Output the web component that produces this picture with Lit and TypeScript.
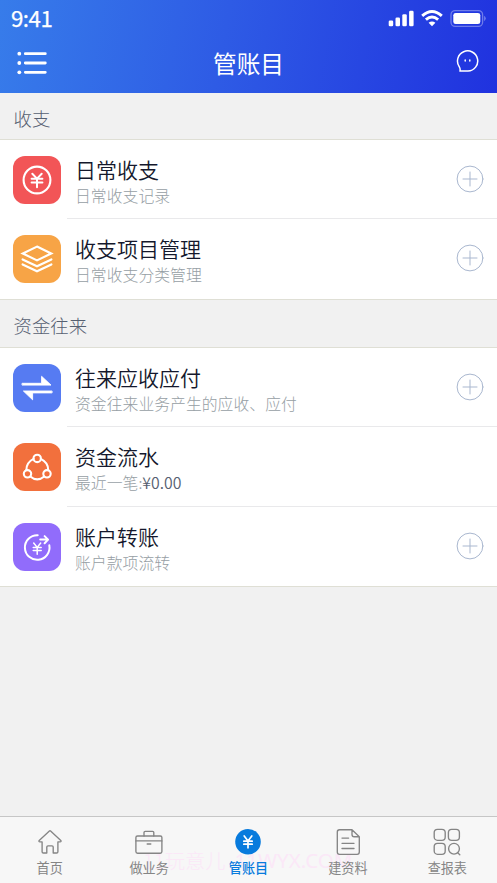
import { LitElement, html, css, svg } from "lit";
import { customElement, property } from "lit/decorators.js";

const icons: Record<string, unknown> = {
  daily: svg`<circle cx="24" cy="24" r="13.4" stroke-width="2.1"/>
    <path d="M19.3 17.8l4.7 4.8 4.7-4.8M18.6 22.8h10.8M18.6 26.6h10.8M24 22.6v8.6" stroke-width="2"/>`,
  layers: svg`<path d="M24 11.6l14.2 6.9L24 25.4 9.8 18.5z" stroke-width="2.2" stroke-linejoin="miter"/>
    <path d="M9.6 24.4L24 31.2l14.4-6.8M9.6 29.4L24 36.2l14.4-6.8" stroke-width="2.2" stroke-linejoin="miter"/>`,
  swap: svg`<path d="M9.4 21.1h28.6L28.6 12.3v7H9.4zM38.7 27H10.4l9.2 8.8v-6.9h19.1z" fill="#fff" stroke-width=".9"/>`,
  nodes: svg`<circle cx="24.2" cy="15.4" r="3.7" stroke-width="2.1"/><circle cx="14.5" cy="30.8" r="3.7" stroke-width="2.1"/><circle cx="34" cy="30.8" r="3.7" stroke-width="2.1"/>
    <path d="M20.6 15.9Q13.3 19.5 13.4 27M27.8 15.9Q35.2 19.5 35.2 27M17.3 33.5Q24.2 39.4 31.2 33.5" stroke-width="2.1"/>`,
  transfer: svg`<path d="M24.7 12.2A12.3 12.3 0 1 0 36.3 22.2M27.2 16.6h7.4M31.6 13.1l3.5 3.5-3.5 3.6" stroke-width="2"/>
    <path d="M20.7 20l3.5 4.4 3.5-4.4M20.2 24.6h8M20.2 27.5h8M24.2 24.4v6.8" stroke-width="1.5"/>`,
};

const tabIcons: Record<string, unknown> = {
  home: svg`<path d="M4.2 13.4L14.4 4q.6-.5 1.2 0l10.2 9.4q.8 1.4-.8 1.5h-2.1v9.8q0 1.3-1.3 1.3h-3.4v-6q0-1.2-1.2-1.2h-4q-1.2 0-1.2 1.2v6H8.4q-1.3 0-1.3-1.3v-9.8H5q-1.6-.1-.8-1.5z"/>`,
  work: svg`<rect x="1.9" y="9" width="26" height="17.2" rx="1.6"/><path d="M1.9 13.9h26M10 9V5.6q0-1.2 1.2-1.2h7.4q1.2 0 1.2 1.2V9M13.2 17h3.6"/>`,
  account: svg`<circle cx="15" cy="14.7" r="12.8" fill="#087bdd" stroke="none"/>
    <path d="M11.2 9l3.8 5 3.8-5M10.8 14.2h8.4M10.8 17.2h8.4M15 14v6.8" stroke="#fff" stroke-width="1.7"/>`,
  doc: svg`<path d="M19 2.7H6.5q-2.2 0-2.2 2.2v20.2q0 2.2 2.2 2.2h17.6q2.2 0 2.2-2.2V9.7zM19 2.7v4.8q0 2.2 2.2 2.2h5.1M9 11.1h6.6M9 16.3h12M9 21.5h12"/>`,
  report: svg`<rect x="2.2" y="2.3" width="11" height="11" rx="3.3"/><rect x="16.4" y="2.3" width="11" height="11" rx="3.3"/><rect x="2.2" y="16.3" width="11" height="11" rx="3.3"/><circle cx="22" cy="21.7" r="5.4"/><path d="M25.7 25.7l2.1 2"/>`,
};

@customElement("ledger-row")
class LedgerRow extends LitElement {
  @property() icon = "";
  @property() color = "";
  @property() heading = "";
  @property() note = "";
  @property() amount = "";
  @property({ type: Boolean }) add = false;

  static styles = css`
    :host { display: flex; height: 79.4px; position: relative; box-sizing: border-box; padding: 16px 13px 0; }
    :host(:not(:last-child))::after { content: ""; position: absolute; left: 67px; right: 0; bottom: 0; height: 1px; background: #e9e9eb; }
    .tile { width: 48px; height: 48px; border-radius: 12px; flex: none; }
    svg { display: block; fill: none; stroke: #fff; stroke-linecap: round; stroke-linejoin: round; }
    .text { flex: 1; margin: -1px 0 0 14px; white-space: nowrap; }
    .heading { font-size: 21px; line-height: 28px; color: #14182c; font-weight: 350; }
    .note { font-size: 15.85px; line-height: 25px; color: #969ea4; font-weight: 300; }
    .amount { color: #566071; font-weight: 350; }
    .plus { width: 28px; height: 28px; margin-top: 9px; stroke: #a9b7cf; }
  `;

  render() {
    return html`
      <svg class="tile" style="background:${this.color}" viewBox="0 0 48 48">${icons[this.icon]}</svg>
      <div class="text">
        <div class="heading">${this.heading}</div>
        <div class="note">${this.note}<span class="amount">${this.amount}</span></div>
      </div>
      ${this.add
        ? html`<svg class="plus" viewBox="0 0 28 28"><circle cx="14" cy="14" r="12.9" /><path d="M14 7v14M7 14h14" /></svg>`
        : ""}
    `;
  }
}

@customElement("app-root")
class AppRoot extends LitElement {
  static styles = css`
    :host { display: flex; flex-direction: column; height: 883px; background: #f1f1f1; overflow: hidden; font-family: "Noto Sans CJK SC", "Noto Sans", sans-serif; }
    svg { display: block; }
    header { height: 93px; flex: none; color: #fff; background: linear-gradient(100deg, #377cea 0%, #2e5be5 45%, #2032df 100%); }
    .status { display: flex; align-items: center; justify-content: space-between; height: 37px; padding: 0 11px; }
    .time { font-size: 22.3px; line-height: 36px; font-weight: 400; letter-spacing: -.5px; margin-top: -3px; -webkit-text-stroke: .25px #fff; }
    .signals { display: block; margin: -1px -1px 0 0; }
    .bar { display: grid; grid-template-columns: 1fr auto 1fr; align-items: center; height: 52px; padding: 0 17px; }
    .title { font-size: 23.7px; font-weight: 400; line-height: 52px; }
    .chat { justify-self: end; margin-top: -3px; }
    .label { box-sizing: border-box; height: 47px; padding: 3px 13.5px 0; font-size: 18.4px; line-height: 45px; font-weight: 300; color: #566071; }
    .label:first-child { height: 46px; }
    .label + .group { border-top: 1px solid #dfdfd5; }
    .group { background: #fff; border-bottom: 1px solid #dfdfd5; }
    main { flex: 1; }
    nav { position: relative; display: grid; grid-template-columns: repeat(5, 1fr); height: 67px; box-sizing: border-box; border-top: 1px solid #c6c6c6; background: #f7f7f7; flex: none; }
    .tab { position: relative; display: flex; flex-direction: column; align-items: center; padding-top: 9.5px; color: #858585; font-size: 13.1px; line-height: 20px; font-weight: 400; }
    .tab svg { fill: none; stroke: #858585; stroke-width: 1.35; stroke-linecap: round; stroke-linejoin: round; margin-bottom: 1px; }
    .tab.active { color: #087bdd; font-weight: 500; }
    .watermark { position: absolute; left: 143px; top: 28px; font-size: 20.3px; line-height: 30px; font-weight: 300; color: #fbe8f7; white-space: nowrap; display: flex; gap: 9px; }
    .watermark span + span { font-family: "Noto Sans", sans-serif; font-size: 20.5px; font-weight: 400; }
  `;

  private tab(icon: string, label: string, active = false) {
    return html`<div class="tab ${active ? "active" : ""}">
      <svg width="30" height="30" viewBox="0 0 30 30">${tabIcons[icon]}</svg>${label}
    </div>`;
  }

  render() {
    return html`
      <header>
        <div class="status">
          <span class="time">9:41</span>
          <svg class="signals" width="99" height="20" viewBox="388 8 99 20" fill="#fff">
            <rect x="388.7" y="20.4" width="4.5" height="5.8" rx="1.3" /><rect x="395.5" y="17.4" width="4.5" height="8.8" rx="1.3" />
            <rect x="402.3" y="14.2" width="4.5" height="12" rx="1.3" /><rect x="409.1" y="10.8" width="4.5" height="15.4" rx="1.3" />
            <path d="M422.2 15.9Q432 6.9 441.8 15.9M425.9 19.7Q432 14.3 438.1 19.7" fill="none" stroke="#fff" stroke-width="2.9" />
            <path d="M428.6 22.8Q432 20.2 435.4 22.8L432 26.3z" />
            <rect x="451" y="10.6" width="31.6" height="15.8" rx="4.2" fill="none" stroke="#fff" stroke-opacity=".35" stroke-width="1.3" />
            <rect x="453.3" y="12.9" width="27" height="11.2" rx="2.4" /><path d="M484.2 15.8q3 2.7 0 5.4z" opacity=".4" />
          </svg>
        </div>
        <div class="bar">
          <svg width="30" height="24" viewBox="17 51 30 24" fill="#fff">
            <circle cx="19.3" cy="53.7" r="1.9" /><circle cx="19.3" cy="63" r="1.9" /><circle cx="19.3" cy="72.3" r="1.9" />
            <path d="M25.3 53.7h20M25.3 63h20M25.3 72.3h20" stroke="#fff" stroke-width="2.8" stroke-linecap="round" />
          </svg>
          <div class="title">管账目</div>
          <svg class="chat" width="24" height="26" viewBox="456 50.7 24 26" fill="none" stroke="#fff" stroke-width="1.5" stroke-linecap="round" stroke-linejoin="round">
            <path d="M460 72.8h8A10.1 10.1 0 1 0 459.2 68.3q1.3 2 .8 4.5zM465.2 61.6v1.2M469.8 61.6v1.2" />
          </svg>
        </div>
      </header>
      <main>
        <div class="label">收支</div>
        <div class="group">
          <ledger-row icon="daily" color="#f25557" heading="日常收支" note="日常收支记录" add></ledger-row>
          <ledger-row icon="layers" color="#f7a446" heading="收支项目管理" note="日常收支分类管理" add></ledger-row>
        </div>
        <div class="label">资金往来</div>
        <div class="group">
          <ledger-row icon="swap" color="#567bf2" heading="往来应收应付" note="资金往来业务产生的应收、应付" add></ledger-row>
          <ledger-row icon="nodes" color="#f2703d" heading="资金流水" note="最近一笔:" amount="¥0.00"></ledger-row>
          <ledger-row icon="transfer" color="#916cfb" heading="账户转账" note="账户款项流转" add></ledger-row>
        </div>
      </main>
      <nav>
        <div class="watermark"><span>11玩意儿</span><span>11WYX.COM</span></div>
        ${this.tab("home", "首页")} ${this.tab("work", "做业务")} ${this.tab("account", "管账目", true)}
        ${this.tab("doc", "建资料")} ${this.tab("report", "查报表")}
      </nav>
    `;
  }
}
